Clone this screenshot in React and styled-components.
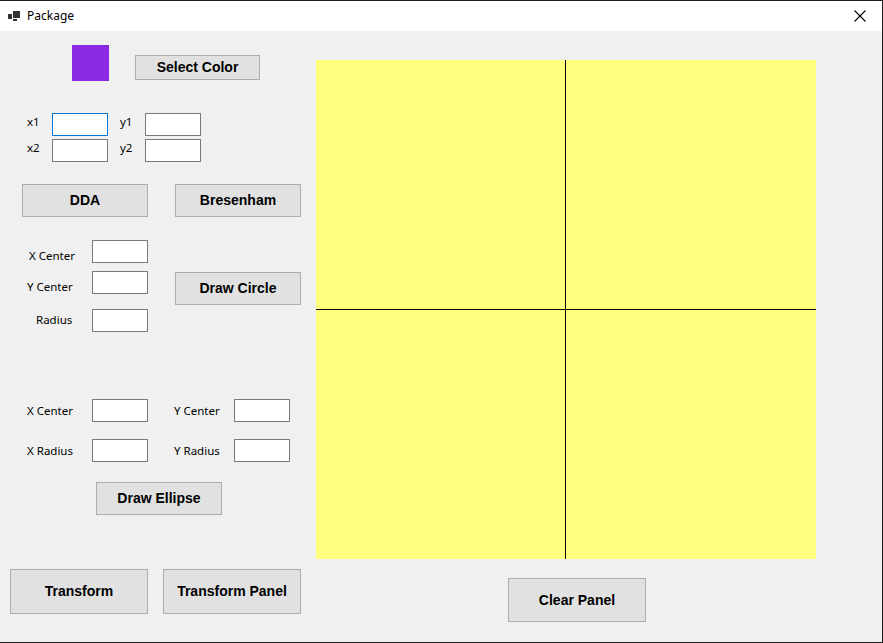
import styled, { createGlobalStyle } from "styled-components";

const Global = createGlobalStyle`
  html, body {
    margin: 0;
    padding: 0;
    background: #f0f0f0;
  }
  * { box-sizing: border-box; }
`;

const Window = styled.div`
  width: 883px;
  height: 643px;
  display: flex;
  flex-direction: column;
  background: #f0f0f0;
  border-top: 1px solid #1e1e1e;
  border-right: 1px solid #1e1e1e;
  border-bottom: 1px solid #1e1e1e;
  overflow: hidden;
`;

const TitleBar = styled.div`
  height: 30px;
  flex: none;
  background: #ffffff;
  display: flex;
  align-items: center;
  padding-left: 8px;
  font-family: "Noto Sans", "Open Sans", sans-serif;
  font-size: 12px;
  color: #000;
`;

const TitleText = styled.span`
  margin-left: 7px;
  margin-top: -1px;
`;

const CloseBox = styled.div`
  margin-left: auto;
  width: 46px;
  height: 30px;
  display: flex;
  align-items: center;
  justify-content: center;
  padding-left: 1px;
`;

const Client = styled.div`
  flex: 1;
  display: flex;
`;

const LeftPanel = styled.div`
  width: 316px;
  flex: none;
  display: flex;
  flex-direction: column;
  padding-top: 14px;
`;

const RightPanel = styled.div`
  flex: 1;
  display: flex;
  flex-direction: column;
  padding-top: 29px;
`;

const Row = styled.div`
  display: flex;
  align-items: flex-start;
  margin-top: ${(p) => p.$top || 0}px;
  padding-left: ${(p) => p.$left || 0}px;
  gap: ${(p) => p.$gap || 0}px;
`;

const Swatch = styled.div`
  width: 37px;
  height: 36px;
  background: #8a2be2;
`;

const Button = styled.button`
  width: ${(p) => p.$w}px;
  height: ${(p) => p.$h}px;
  margin-top: ${(p) => p.$top || 0}px;
  margin-left: ${(p) => p.$left || 0}px;
  flex: none;
  background: #e1e1e1;
  border: 1px solid #adadad;
  border-radius: 0;
  padding: 0 0 1px;
  font-family: "Liberation Sans", Arial, sans-serif;
  font-weight: bold;
  font-size: 14px;
  color: #000;
`;

const CoordGrid = styled.div`
  display: grid;
  grid-template-columns: 25px 68px 25px 56px;
  row-gap: 3px;
  margin-top: 32px;
  padding-left: 27px;
  align-items: center;
`;

const Label = styled.span`
  font-family: "Noto Sans", "Open Sans", sans-serif;
  font-size: 11.5px;
  line-height: 16px;
  color: #000;
  white-space: nowrap;
  width: ${(p) => (p.$w ? `${p.$w}px` : "auto")};
  padding-left: ${(p) => p.$pad || 0}px;
  margin-top: ${(p) => p.$dy || 0}px;
  flex: none;
`;

const CoordLabel = styled(Label)`
  margin-top: -5px;
`;

const TextBox = styled.input`
  width: 56px;
  height: 23px;
  flex: none;
  margin: 0;
  border: 1px solid ${(p) => (p.$focus ? "#0078d7" : "#7a7a7a")};
  background: #fff;
  outline: none;
  padding: 0 2px;
  font-size: 12px;
`;

const FieldRow = styled.div`
  display: flex;
  height: 23px;
  align-items: ${(p) => (p.$center ? "center" : "flex-start")};
  margin-top: ${(p) => p.$top || 0}px;
  padding-left: ${(p) => p.$left || 0}px;
`;

const CircleBlock = styled.div`
  display: flex;
  margin-top: 23px;
`;

const CircleFields = styled.div`
  display: flex;
  flex-direction: column;
`;

const Canvas = styled.div`
  width: 500px;
  height: 499px;
  background: #ffff80;
  display: grid;
  grid-template-columns: 249px 1px 1fr;
  grid-template-rows: 249px 1px 1fr;
`;

const AxisV = styled.div`
  grid-column: 2;
  grid-row: 1 / 4;
  background: #000;
`;

const AxisH = styled.div`
  grid-column: 1 / 4;
  grid-row: 2;
  background: #000;
`;

function AppIcon() {
  return (
    <svg width="12" height="11" viewBox="0 0 12 11">
      <rect x="0" y="3" width="4" height="5" fill="#333" />
      <rect x="5" y="0" width="7" height="7" fill="#333" />
      <rect x="5" y="8" width="4" height="2" fill="#333" />
    </svg>
  );
}

function CloseIcon() {
  return (
    <svg width="12" height="12" viewBox="0 0 12 12">
      <path d="M0.5 0.5 L11.5 11.5 M11.5 0.5 L0.5 11.5" stroke="#000" strokeWidth="1.1" />
    </svg>
  );
}

export default function App() {
  return (
    <>
      <Global />
      <Window>
        <TitleBar>
          <AppIcon />
          <TitleText>Package</TitleText>
          <CloseBox>
            <CloseIcon />
          </CloseBox>
        </TitleBar>
        <Client>
          <LeftPanel>
            <Row $left={72}>
              <Swatch />
              <Button $w={125} $h={25} $top={10} $left={26}>
                Select Color
              </Button>
            </Row>

            <CoordGrid>
              <CoordLabel>x1</CoordLabel>
              <div><TextBox $focus /></div>
              <CoordLabel>y1</CoordLabel>
              <TextBox />
              <CoordLabel>x2</CoordLabel>
              <div><TextBox /></div>
              <CoordLabel>y2</CoordLabel>
              <TextBox />
            </CoordGrid>

            <Row $top={22} $left={22} $gap={27}>
              <Button $w={126} $h={33}>DDA</Button>
              <Button $w={126} $h={33}>Bresenham</Button>
            </Row>

            <CircleBlock>
              <CircleFields>
                <FieldRow>
                  <Label $w={92} $pad={29} $dy={8}>X Center</Label>
                  <TextBox />
                </FieldRow>
                <FieldRow $top={8}>
                  <Label $w={92} $pad={27} $dy={8}>Y Center</Label>
                  <TextBox />
                </FieldRow>
                <FieldRow $top={15}>
                  <Label $w={92} $pad={36} $dy={3}>Radius</Label>
                  <TextBox />
                </FieldRow>
              </CircleFields>
              <Button $w={126} $h={33} $top={32} $left={27}>
                Draw Circle
              </Button>
            </CircleBlock>

            <FieldRow $top={67} $center>
              <Label $w={92} $pad={27}>X Center</Label>
              <TextBox />
              <Label $w={86} $pad={26}>Y Center</Label>
              <TextBox />
            </FieldRow>
            <FieldRow $top={17} $center>
              <Label $w={92} $pad={27}>X Radius</Label>
              <TextBox />
              <Label $w={86} $pad={26}>Y Radius</Label>
              <TextBox />
            </FieldRow>

            <Row $top={20} $left={96}>
              <Button $w={126} $h={33}>Draw Ellipse</Button>
            </Row>

            <Row $top={54} $left={10} $gap={15}>
              <Button $w={138} $h={45}>Transform</Button>
              <Button $w={138} $h={45}>Transform Panel</Button>
            </Row>
          </LeftPanel>

          <RightPanel>
            <Canvas>
              <AxisV />
              <AxisH />
            </Canvas>
            <Row $top={19} $left={192}>
              <Button $w={138} $h={44}>Clear Panel</Button>
            </Row>
          </RightPanel>
        </Client>
      </Window>
    </>
  );
}
